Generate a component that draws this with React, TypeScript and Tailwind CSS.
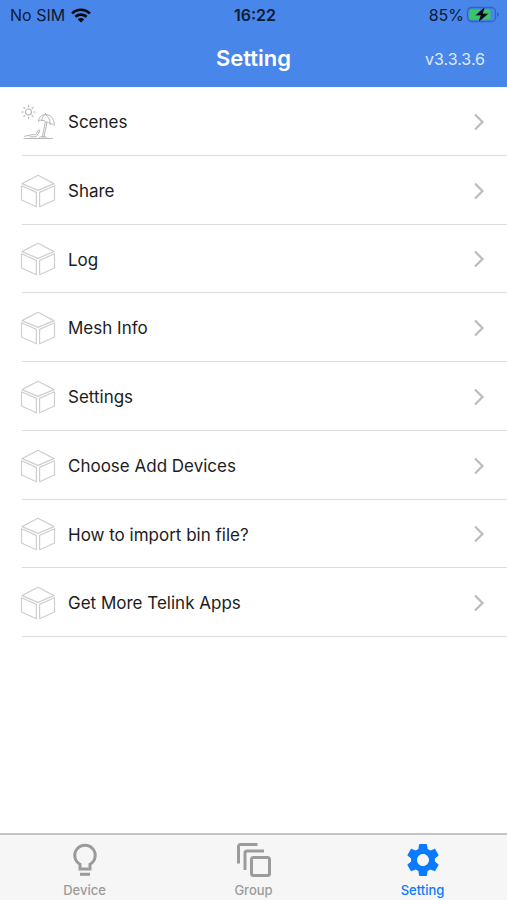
import { useState } from "react";
import type { ReactNode } from "react";
import { clsx } from "clsx";

const menuItems = [
  { label: "Scenes", href: "#scenes", icon: "beach" },
  { label: "Share", href: "#share", icon: "box" },
  { label: "Log", href: "#log", icon: "box" },
  { label: "Mesh Info", href: "#mesh-info", icon: "box" },
  { label: "Settings", href: "#settings", icon: "box" },
  { label: "Choose Add Devices", href: "#add-devices", icon: "box" },
  { label: "How to import bin file?", href: "#import-bin", icon: "box" },
  { label: "Get More Telink Apps", href: "#more-apps", icon: "box" },
];

function BeachIcon() {
  return (
    <svg
      viewBox="0 0 36 36"
      className="size-9 shrink-0 text-[#b8b8b8]"
      fill="none"
      stroke="currentColor"
      strokeLinecap="round"
      strokeLinejoin="round"
      aria-hidden="true"
    >
      <circle cx="8.500" cy="8" r="3" strokeWidth="1.200" />
      <path
        d="M8.500 1.300v1.500M8.500 13.200v1.500M1.800 8h1.500M13.700 8h1.500M3.800 3.300l1 1M12.200 11.700l1 1M3.800 12.700l1-1M12.200 4.300l1-1"
        strokeWidth="1.200"
      />
      <path d="M18.300 17c.5-3.700 3-6.200 7-6.500 5.300-.2 9.200 4.200 9 11-1.100-1.400-2.600-2-4.100-1.300-1-1.800-2.700-2.600-4.300-2-1.200-1.700-2.600-2.300-4.100-1.600-1.200-.7-2.500-.6-3.500.4z" />
      <path d="M21.800 16.600c-.2-2.500 1.200-4.900 3.500-6.100 3.200 2 5 5.300 4.900 9.700M25.300 10.500l.2-1.200" />
      <path d="M25.300 18.200 22.200 33.500M26.900 18.800 23.900 33.500" />
      <path d="M4 34.500h28.500M4.500 32.300l7.500-1.600h3.500l3.300-4.800 1.200.7-3.800 6.200H10M19 34c1.500-2.300 6-2.300 8 0" />
    </svg>
  );
}

function BoxIcon() {
  return (
    <svg
      viewBox="0 0 36 36"
      className="size-9 shrink-0 text-[#cfcfcf]"
      fill="none"
      stroke="currentColor"
      strokeWidth="1.200"
      strokeLinejoin="round"
      aria-hidden="true"
    >
      <path d="M18 2.200 34 10.600 18 17.400 2 10.600z" />
      <path d="M1.500 12.800 16.400 19.400v14.300L1.500 27z" />
      <path d="M34.500 12.800 19.600 19.400v14.300L34.500 27z" />
    </svg>
  );
}

function ChevronIcon() {
  return (
    <svg
      viewBox="0 0 12 18"
      className="h-[18px] w-3 shrink-0 text-[#bcbcbf]"
      fill="none"
      stroke="currentColor"
      strokeWidth="2.200"
      aria-hidden="true"
    >
      <path d="M2 1.500 9.500 9 2 16.500" />
    </svg>
  );
}

function WifiIcon() {
  return (
    <svg viewBox="0 0 20 15" className="h-[15px] w-5" fill="#05080f" aria-hidden="true">
      <path d="M10 .5c3.700 0 7 1.400 9.500 3.700.2.200.2.500 0 .7l-1.200 1.200c-.2.200-.5.200-.7 0A11.200 11.200 0 0 0 10 3.100c-2.900 0-5.600 1.100-7.600 3-.2.200-.5.200-.7 0L.5 4.900c-.2-.2-.2-.5 0-.7A13.800 13.800 0 0 1 10 .5z" />
      <path d="M10 5.300c2.400 0 4.600.9 6.200 2.300.2.200.2.500 0 .7L15 9.500c-.2.200-.5.200-.7 0A6.500 6.500 0 0 0 10 7.900c-1.700 0-3.200.6-4.300 1.600-.2.200-.5.200-.7 0L3.800 8.300c-.2-.2-.2-.5 0-.7A9.300 9.300 0 0 1 10 5.300z" />
      <path d="M10 10.100c1.100 0 2.100.4 2.900 1 .2.200.2.500 0 .7l-2.500 2.500c-.2.200-.6.200-.8 0l-2.500-2.500c-.2-.2-.2-.5 0-.7.800-.6 1.800-1 2.900-1z" />
    </svg>
  );
}

function BatteryIcon() {
  return (
    <svg viewBox="0 0 34 18" className="h-[18px] w-[34px]" fill="none" aria-hidden="true">
      <rect x="1.500" y="1.500" width="28" height="14" rx="4" stroke="#3663b4" strokeWidth="1.300" />
      <path d="M31.300 6.500v4c.9-.3 1.400-1.100 1.400-2s-.5-1.700-1.400-2z" fill="#2f58a5" />
      <rect x="3.500" y="3.500" width="21" height="10" rx="2.200" fill="#37c862" />
      <path
        d="M18.800 1 9.700 9.300h5.200l-2.300 6.800 9.400-8.400h-5.400z"
        fill="#05080f"
        stroke="#4986ea"
        strokeWidth="1.200"
        paintOrder="stroke"
      />
    </svg>
  );
}

function BulbIcon() {
  return (
    <svg viewBox="0 0 36 36" className="size-9" fill="none" stroke="currentColor" strokeWidth="3" aria-hidden="true">
      <path d="M13 27v-4.700a10.200 10.200 0 1 1 10 0V27z" />
      <path d="M13 32.300h10" />
    </svg>
  );
}

function GroupIcon() {
  return (
    <svg viewBox="0 0 36 36" className="size-9" fill="none" stroke="currentColor" strokeWidth="3" aria-hidden="true">
      <path d="M2.500 21.500V4.500a2 2 0 0 1 2-2H21.500" />
      <path d="M9 28V11a2 2 0 0 1 2-2h17" />
      <rect x="15.500" y="15.500" width="18" height="18" rx="2" />
    </svg>
  );
}

function GearIcon() {
  return (
    <svg viewBox="0 0 24 24" className="size-10" fill="currentColor" aria-hidden="true">
      <path d="M19.140 12.940c.04-.3.060-.61.060-.94 0-.32-.02-.64-.07-.94l2.030-1.580c.18-.14.230-.41.120-.61l-1.920-3.320c-.12-.22-.37-.29-.59-.22l-2.390.96c-.5-.38-1.030-.7-1.620-.94l-.36-2.540c-.04-.24-.24-.41-.48-.41h-3.840c-.24 0-.43.170-.47.410l-.36 2.540c-.59.240-1.130.570-1.620.940l-2.390-.96c-.22-.08-.47 0-.59.220L2.740 8.870c-.12.210-.08.470.120.610l2.030 1.580c-.05.300-.09.630-.09.940s.02.640.070.940l-2.030 1.580c-.18.140-.23.410-.12.610l1.920 3.320c.12.220.370.290.590.220l2.390-.96c.5.380 1.030.700 1.620.940l.36 2.540c.05.240.240.410.480.410h3.840c.24 0 .44-.17.470-.41l.36-2.540c.59-.24 1.130-.56 1.620-.94l2.390.96c.22.080.470 0 .590-.22l1.920-3.320c.12-.22.070-.47-.12-.61l-2.010-1.580zM12 15.600c-1.980 0-3.600-1.620-3.600-3.600s1.620-3.600 3.600-3.600 3.600 1.620 3.600 3.600-1.620 3.600-3.600 3.600z" />
    </svg>
  );
}

const tabs: { label: string; icon: ReactNode }[] = [
  { label: "Device", icon: <BulbIcon /> },
  { label: "Group", icon: <GroupIcon /> },
  { label: "Setting", icon: <GearIcon /> },
];

export default function App() {
  const [activeTab, setActiveTab] = useState("Setting");

  return (
    <div className="flex min-h-screen flex-col bg-white font-['Inter',sans-serif] text-[#1c1c1e]">
      <header className="bg-[#4986ea]">
        {/* Status bar */}
        <div className="grid h-[30px] grid-cols-3 items-center pr-[7px] pl-[10px] text-base text-[#0c1a35]">
          <div className="flex items-center gap-[6px]">
            <span>No SIM</span>
            <WifiIcon />
          </div>
          <span className="text-center font-semibold">16:22</span>
          <div className="flex items-center justify-end gap-[2px]">
            <span>85%</span>
            <BatteryIcon />
          </div>
        </div>

        {/* Title bar */}
        <div className="grid h-[57px] grid-cols-[1fr_auto_1fr] items-center px-[22px] text-white">
          <h1 className="col-start-2 text-[22px] font-semibold">Setting</h1>
          <span className="text-right text-base text-[#dfeaff]">v3.3.3.6</span>
        </div>
      </header>

      <main className="flex-1">
        <ul className="grid min-h-[550px] auto-rows-fr">
          {menuItems.map((item) => (
            <li key={item.label} className="ml-[22px] border-b border-[#dcdcdc]">
              <a
                href={item.href}
                className="-ml-[2px] flex h-full items-center gap-3 pt-[2px] pr-[22px] text-[17px]"
              >
                {item.icon === "beach" ? <BeachIcon /> : <BoxIcon />}
                <span className="flex-1 pt-[2px]">{item.label}</span>
                <ChevronIcon />
              </a>
            </li>
          ))}
        </ul>
      </main>

      {/* Tab bar */}
      <nav className="grid h-[67px] grid-cols-3 border-t-2 border-[#c4c4c4] bg-[#f6f6f6]">
        {tabs.map((tab) => (
          <button
            key={tab.label}
            type="button"
            onClick={() => setActiveTab(tab.label)}
            aria-current={activeTab === tab.label ? "page" : undefined}
            className={clsx(
              "flex flex-col items-center justify-end gap-[2px] pb-[2px] text-[13px] font-medium",
              activeTab === tab.label ? "text-[#0a7aff]" : "text-[#9b9b9b]",
            )}
          >
            <span className="flex h-10 items-center">{tab.icon}</span>
            <span className="leading-4">{tab.label}</span>
          </button>
        ))}
      </nav>
    </div>
  );
}
